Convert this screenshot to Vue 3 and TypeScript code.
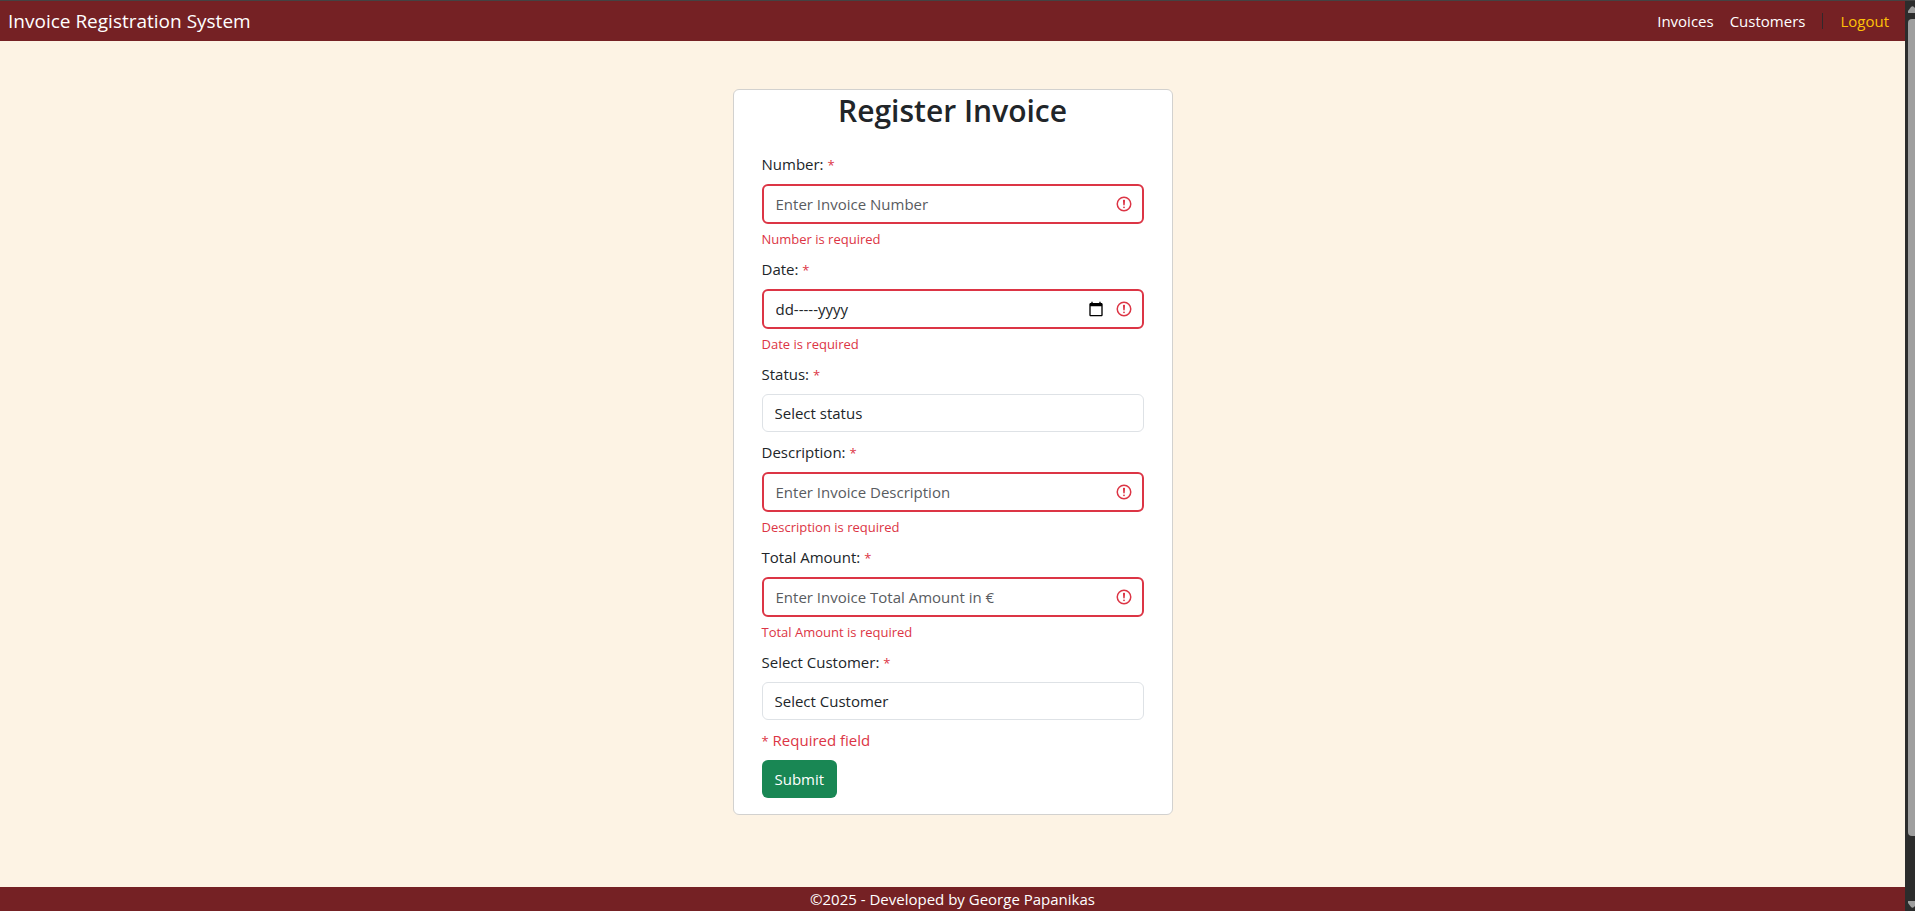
<script setup lang="ts">
import { reactive } from 'vue'

interface Field {
  id: string
  label: string
  kind: 'text' | 'date' | 'select'
  hint: string
  error?: string
}

const fields: Field[] = [
  { id: 'number', label: 'Number:', kind: 'text', hint: 'Enter Invoice Number', error: 'Number is required' },
  { id: 'date', label: 'Date:', kind: 'date', hint: 'dd-----yyyy', error: 'Date is required' },
  { id: 'status', label: 'Status:', kind: 'select', hint: 'Select status' },
  { id: 'description', label: 'Description:', kind: 'text', hint: 'Enter Invoice Description', error: 'Description is required' },
  { id: 'total', label: 'Total Amount:', kind: 'text', hint: 'Enter Invoice Total Amount in €', error: 'Total Amount is required' },
  { id: 'customer', label: 'Select Customer:', kind: 'select', hint: 'Select Customer' },
]

const form = reactive<Record<string, string>>(
  Object.fromEntries(fields.map((f) => [f.id, ''])),
)
</script>

<template>
  <div class="shell">
    <div class="page">
      <header class="navbar">
        <a class="brand" href="#">Invoice Registration System</a>
        <nav class="links">
          <a href="#invoices">Invoices</a>
          <a href="#customers">Customers</a>
          <span class="divider"></span>
          <a class="logout" href="#logout">Logout</a>
        </nav>
      </header>

      <main class="content">
        <form class="card" novalidate @submit.prevent>
          <h1>Register Invoice</h1>

          <div v-for="f in fields" :key="f.id" class="field">
            <label :for="f.id">{{ f.label }} <span class="star">*</span></label>

            <select v-if="f.kind === 'select'" :id="f.id" v-model="form[f.id]" class="select">
              <option value="">{{ f.hint }}</option>
            </select>

            <div v-else class="control">
              <input
                :id="f.id"
                v-model="form[f.id]"
                type="text"
                :class="{ date: f.kind === 'date' }"
                :placeholder="f.hint"
                aria-invalid="true"
                :aria-describedby="f.id + '-error'"
              />
              <button v-if="f.kind === 'date'" class="picker" type="button" aria-label="Open calendar">
                <svg viewBox="0 0 24 24" width="16" height="16">
                  <path d="M20 3h-1V1h-2v2H7V1H5v2H4c-1.1 0-2 .9-2 2v16c0 1.1.9 2 2 2h16c1.1 0 2-.9 2-2V5c0-1.1-.9-2-2-2zm0 18H4V8h16v13z" />
                </svg>
              </button>
              <svg class="alert" viewBox="0 0 12 12" width="18" height="18" aria-hidden="true">
                <circle cx="6" cy="6" r="4.5" fill="none" stroke="currentColor" />
                <path d="M5.8 3.6h.4L6 6.5z" fill="none" stroke="currentColor" stroke-linejoin="round" />
                <circle cx="6" cy="8.2" r=".6" fill="currentColor" />
              </svg>
            </div>

            <p v-if="f.error" :id="f.id + '-error'" class="error">{{ f.error }}</p>
          </div>

          <p class="note"><span class="star">*</span> Required field</p>
          <button class="submit" type="submit">Submit</button>
        </form>
      </main>

      <footer class="footer">©2025 - Developed by George Papanikas</footer>
    </div>

    <div class="scrollbar" aria-hidden="true">
      <svg viewBox="0 0 7 7" width="7" height="7"><path d="M0 7V5L3 1q1.500-1.500 3 0l1 1v5z" /></svg>
      <div class="track"><div class="thumb"></div></div>
      <svg viewBox="0 0 7 7" width="7" height="7"><path d="M0 0V2L3 6q1.500 1.500 3 0l1-1V0z" /></svg>
    </div>
  </div>
</template>

<style>
body {
  margin: 0;
}
</style>

<style scoped>
.shell {
  display: flex;
  box-sizing: border-box;
  min-height: 100vh;
  border-top: 1px solid #434343;
  background: #fdf3e4;
  color: #212529;
  font: 15px/24px "Open Sans", "Noto Sans", sans-serif;
}

.page {
  display: flex;
  flex: 1;
  flex-direction: column;
}

.navbar {
  display: flex;
  align-items: center;
  justify-content: space-between;
  height: 40px;
  padding: 0 16px 0 8px;
  background: #752124;
}

.navbar a {
  color: #fff;
  text-decoration: none;
}

.navbar .brand {
  font-size: 19px;
}

.links {
  display: flex;
  align-items: center;
  gap: 16px;
}

.divider {
  width: 1px;
  height: 16px;
  margin: 0 1px;
  background: #33282b;
}

.navbar .logout {
  color: #ffc107;
}

.content {
  display: flex;
  flex: 1;
  align-items: flex-start;
  justify-content: center;
  padding: 48px 0;
}

.card {
  box-sizing: border-box;
  width: 440px;
  padding: 0 28px 16px;
  border: 1px solid #d2d1cf;
  border-radius: 6px;
  background: #fff;
}

h1 {
  margin: 0 0 20px;
  font-size: 30px;
  font-weight: 600;
  line-height: 42px;
  text-align: center;
}

.field {
  margin-bottom: 8px;
}

label {
  display: block;
  margin-bottom: 8px;
}

.star,
.error,
.note {
  color: #dc3545;
}

.star {
  font-size: 13px;
  line-height: 1;
}

.control {
  display: flex;
  align-items: center;
  box-sizing: border-box;
  height: 40px;
  padding: 0 9px 0 12px;
  border: 2px solid #dc3545;
  border-radius: 6px;
}

input {
  flex: 1;
  min-width: 0;
  height: 36px;
  padding: 0;
  border: 0;
  outline: 0;
  background: transparent;
  color: #212529;
  font: inherit;
}

input::placeholder {
  color: #595c5f;
  opacity: 1;
}

input.date::placeholder {
  color: #212529;
}

.picker {
  display: flex;
  margin-right: 11px;
  padding: 0;
  border: 0;
  background: none;
}

.alert {
  color: #dc3545;
}

.select {
  display: block;
  appearance: none;
  width: 100%;
  height: 38px;
  padding: 0 12px;
  border: 1px solid #dee2e6;
  border-radius: 6px;
  background: #fff;
  color: #212529;
  font: inherit;
}

.error {
  margin: 5px 0 0;
  font-size: 13px;
  line-height: 20px;
}

.note {
  margin: 0 0 8px;
}

.submit {
  display: block;
  height: 38px;
  padding: 0 13px;
  border: 0;
  border-radius: 6px;
  background: #198754;
  color: #fff;
  font: inherit;
}

.footer {
  background: #752124;
  color: #fff;
  text-align: center;
}

.scrollbar {
  display: flex;
  flex-direction: column;
  align-items: flex-end;
  box-sizing: border-box;
  width: 10px;
  padding: 5px 0 3px;
  background: #2c2c2c;
}

.scrollbar svg {
  fill: #9f9f9f;
}

.track {
  flex: 1;
  width: 7px;
  margin: 6px 0 4px;
}

.thumb {
  height: 93%;
  border-radius: 4px 0 0 4px;
  background: #9f9f9f;
}
</style>
